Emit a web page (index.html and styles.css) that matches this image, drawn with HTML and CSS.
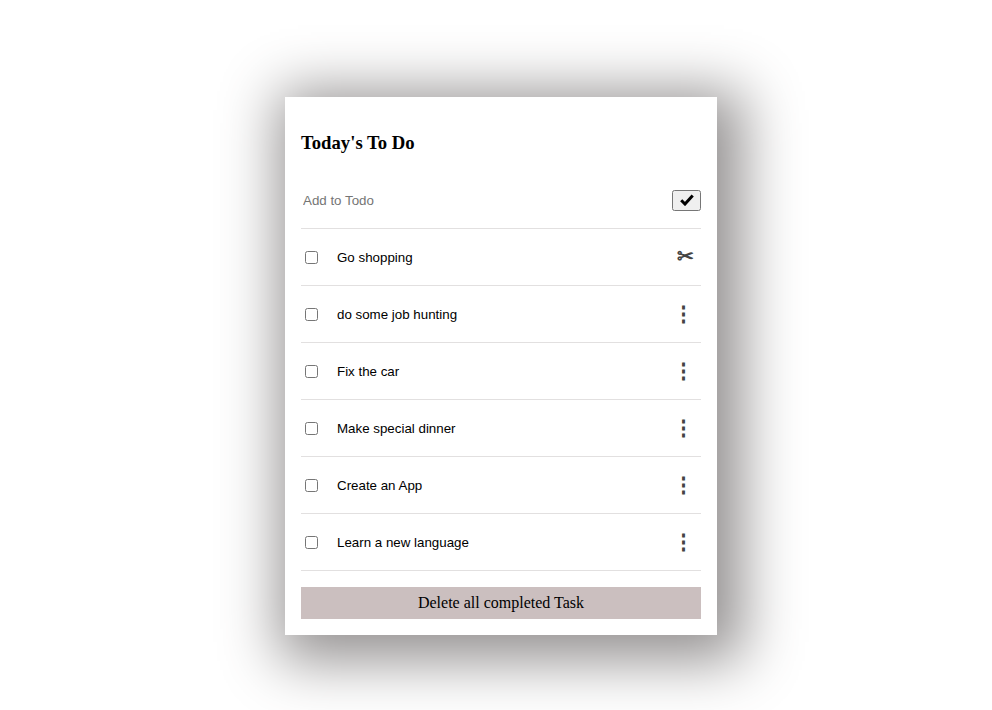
FILE: index.html
```html
<!DOCTYPE html>
<html lang="en">
<head>
<meta charset="utf-8">
<title>To Do</title>
<link rel="stylesheet" href="styles.css">
</head>
<body>
<main class="card">
  <h3 class="title">Today's To Do</h3>
  <form class="row add">
    <input class="text" type="text" placeholder="Add to Todo">
    <button class="submit" type="button" aria-label="Add"><svg width="14" height="12" viewBox="0 0 14 12"><path d="M1.2 6.2 5 10 12.7 1.6" fill="none" stroke="#000" stroke-width="3"/></svg></button>
  </form>
  <ul class="list">
    <li class="row"><input class="check" type="checkbox"><input class="text" type="text" value="Go shopping"><span class="icon cut">✂</span></li>
    <li class="row"><input class="check" type="checkbox"><input class="text" type="text" value="do some job hunting"><span class="icon">⋮</span></li>
    <li class="row"><input class="check" type="checkbox"><input class="text" type="text" value="Fix the car"><span class="icon">⋮</span></li>
    <li class="row"><input class="check" type="checkbox"><input class="text" type="text" value="Make special dinner"><span class="icon">⋮</span></li>
    <li class="row"><input class="check" type="checkbox"><input class="text" type="text" value="Create an App"><span class="icon">⋮</span></li>
    <li class="row"><input class="check" type="checkbox"><input class="text" type="text" value="Learn a new language"><span class="icon">⋮</span></li>
  </ul>
  <div class="clear">Delete all completed Task</div>
</main>
</body>
</html>
```
FILE: styles.css
```css
* { box-sizing: border-box; }
body {
  display: flex;
  align-items: flex-start;
  min-height: 710px;
  margin: 0;
  padding: 97px 0 0 285px;
  font-family: "Liberation Serif", serif;
}
.card {
  width: 432px;
  height: 538px;
  padding: 16px;
  background: #fff;
  box-shadow: 10px 10px 54px 16px #959292;
}
.title { margin: 19px 0 18px; font-size: 18.72px; line-height: 22px; }
.row {
  display: flex;
  align-items: center;
  height: 57px;
  border-bottom: 1px solid #e2e0e0;
}
.list { margin: 0; padding: 0; list-style: none; }
.text {
  flex: 1;
  border: 0;
  padding: 1px 2px;
  background: none;
  font: 13.333px "Liberation Sans", sans-serif;
  color: #000;
}
.text::placeholder { color: #757575; }
.check { margin: 3px 17px 3px 4px; }
.submit {
  display: flex;
  align-items: center;
  justify-content: center;
  width: 29px;
  height: 21px;
  padding: 0 0 1px 0;
}
.icon {
  width: 34px;
  padding: 0 1px 1px 0;
  text-align: center;
  font-family: "Liberation Sans", sans-serif;
  font-size: 20.5px;
  line-height: 24px;
  font-weight: bold;
  color: #444;
}
.cut { padding: 0 0 2px 2px; font-family: "Liberation Serif", serif; font-size: 20px; }
.clear {
  height: 32px;
  margin-top: 16px;
  background: #cbbfbf;
  text-align: center;
  font-size: 16px;
  line-height: 32px;
}
```
